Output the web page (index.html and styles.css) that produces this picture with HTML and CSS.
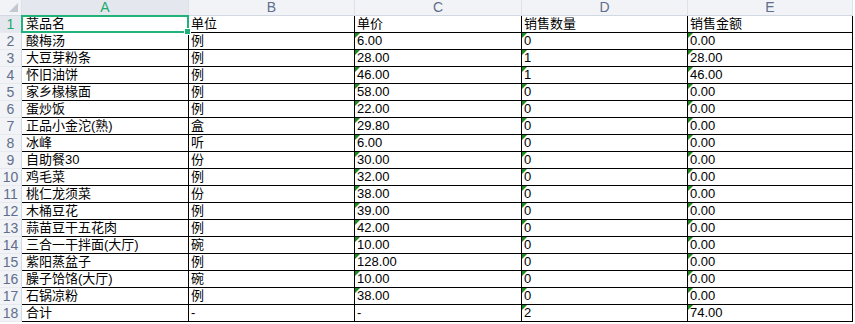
FILE: index.html
```html
<!DOCTYPE html>
<html lang="zh">
<head>
<meta charset="utf-8">
<title>Sheet</title>
<link rel="stylesheet" href="styles.css">
</head>
<body>
<div class="sheet">
  <div class="grid">
    <div class="hd corner"><span class="tri"></span></div>
    <div class="hd col sel">A</div>
    <div class="hd col">B</div>
    <div class="hd col">C</div>
    <div class="hd col">D</div>
    <div class="hd col last">E</div>

    <div class="rn sel">1</div><div class="c a">菜品名</div><div class="c">单位</div><div class="c">单价</div><div class="c">销售数量</div><div class="c">销售金额</div>
    <div class="rn">2</div><div class="c a">酸梅汤</div><div class="c">例</div><div class="c n">6.00</div><div class="c n">0</div><div class="c n">0.00</div>
    <div class="rn">3</div><div class="c a">大豆芽粉条</div><div class="c">例</div><div class="c n">28.00</div><div class="c n">1</div><div class="c n">28.00</div>
    <div class="rn">4</div><div class="c a">怀旧油饼</div><div class="c">例</div><div class="c n">46.00</div><div class="c n">1</div><div class="c n">46.00</div>
    <div class="rn">5</div><div class="c a">家乡椽椽面</div><div class="c">例</div><div class="c n">58.00</div><div class="c n">0</div><div class="c n">0.00</div>
    <div class="rn">6</div><div class="c a">蛋炒饭</div><div class="c">例</div><div class="c n">22.00</div><div class="c n">0</div><div class="c n">0.00</div>
    <div class="rn">7</div><div class="c a">正品小金沱(熟)</div><div class="c">盒</div><div class="c n">29.80</div><div class="c n">0</div><div class="c n">0.00</div>
    <div class="rn">8</div><div class="c a">冰峰</div><div class="c">听</div><div class="c n">6.00</div><div class="c n">0</div><div class="c n">0.00</div>
    <div class="rn">9</div><div class="c a">自助餐30</div><div class="c">份</div><div class="c n">30.00</div><div class="c n">0</div><div class="c n">0.00</div>
    <div class="rn">10</div><div class="c a">鸡毛菜</div><div class="c">例</div><div class="c n">32.00</div><div class="c n">0</div><div class="c n">0.00</div>
    <div class="rn">11</div><div class="c a">桃仁龙须菜</div><div class="c">份</div><div class="c n">38.00</div><div class="c n">0</div><div class="c n">0.00</div>
    <div class="rn">12</div><div class="c a">木桶豆花</div><div class="c">例</div><div class="c n">39.00</div><div class="c n">0</div><div class="c n">0.00</div>
    <div class="rn">13</div><div class="c a">蒜苗豆干五花肉</div><div class="c">例</div><div class="c n">42.00</div><div class="c n">0</div><div class="c n">0.00</div>
    <div class="rn">14</div><div class="c a">三合一干拌面(大厅)</div><div class="c">碗</div><div class="c n">10.00</div><div class="c n">0</div><div class="c n">0.00</div>
    <div class="rn">15</div><div class="c a">紫阳蒸盆子</div><div class="c">例</div><div class="c n">128.00</div><div class="c n">0</div><div class="c n">0.00</div>
    <div class="rn">16</div><div class="c a">臊子饸饹(大厅)</div><div class="c">碗</div><div class="c n">10.00</div><div class="c n">0</div><div class="c n">0.00</div>
    <div class="rn">17</div><div class="c a">石锅凉粉</div><div class="c">例</div><div class="c n">38.00</div><div class="c n">0</div><div class="c n">0.00</div>
    <div class="rn">18</div><div class="c a">合计</div><div class="c">-</div><div class="c">-</div><div class="c n">2</div><div class="c n">74.00</div>
  </div>
  <div class="selection"><span class="handle"></span></div>
</div>
</body>
</html>
```

FILE: styles.css
```css
html, body {
  margin: 0;
  padding: 0;
  background: #ffffff;
}

.sheet {
  position: relative;
  width: 855px;
  height: 324px;
  overflow: hidden;
  font-family: "Liberation Sans", "Noto Sans CJK SC", sans-serif;
  font-size: 13px;
  color: #000;
}

.grid {
  display: grid;
  grid-template-columns: 22px 167px 166px 167px 166px 165px;
  grid-template-rows: 16px;
  grid-auto-rows: 17px;
}

.hd {
  box-sizing: border-box;
  background: #f1f3f6;
  border-bottom: 1px solid #d3d9e3;
  border-right: 1px solid #dde2ea;
  color: #5f6e8c;
  font-size: 14px;
  line-height: 15px;
  text-align: center;
}

.hd.sel {
  background: #e4e8ee;
  color: #21a96f;
}

.hd.last {
  border-right: 1px solid #dde2ea;
}

.corner {
  position: relative;
}

.tri {
  position: absolute;
  right: 3px;
  bottom: 3px;
  width: 0;
  height: 0;
  border-left: 9px solid transparent;
  border-bottom: 9px solid #c3c8d0;
}

.rn {
  box-sizing: border-box;
  background: #f1f3f6;
  border-right: 1px solid #d3d9e3;
  border-bottom: 1px solid #e6e9ee;
  color: #5f6e8c;
  font-size: 14px;
  line-height: 16px;
  text-align: center;
}

.rn.sel {
  background: #e4e8ee;
  color: #21a96f;
}

.c {
  position: relative;
  box-sizing: border-box;
  border-right: 1px solid #000;
  border-bottom: 1px solid #000;
  padding-left: 2px;
  line-height: 16px;
  white-space: nowrap;
  overflow: hidden;
}

.c.a {
  padding-left: 4px;
}

.c.n::before {
  content: "";
  position: absolute;
  left: 0;
  top: 0;
  width: 0;
  height: 0;
  border-top: 5px solid #1c8a1c;
  border-right: 5px solid transparent;
}

.selection {
  position: absolute;
  left: 21px;
  top: 15px;
  width: 168px;
  height: 18px;
  box-sizing: border-box;
  border: 2px solid #21b27a;
  pointer-events: none;
}

.handle {
  position: absolute;
  right: -4px;
  bottom: -4px;
  width: 5px;
  height: 5px;
  background: #21b27a;
  border: 1px solid #fff;
}
```
